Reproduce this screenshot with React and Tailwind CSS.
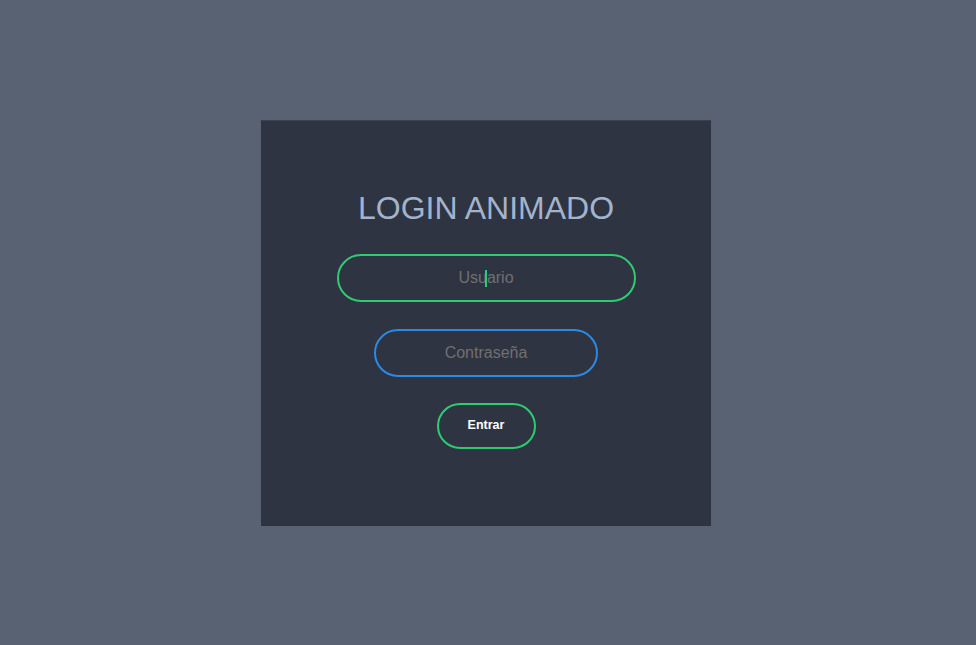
import { useState } from 'react';

const App = () => {
  const [user, setUser] = useState('');
  const [pass, setPass] = useState('');

  return (
    <div
      className="min-h-[645px] w-full bg-[#596273] flex items-center justify-center pr-[4px] pt-[1px]"
      style={{ fontFamily: '"Liberation Sans", Arial, sans-serif' }}
    >
      {/* Login box */}
      <form
        onSubmit={(e) => e.preventDefault()}
        className="w-[450px] h-[405px] bg-[#2e3442] flex flex-col items-center pt-[67px] shadow-[0_-1px_0_#3a4150]"
      >
        <h1 className="text-[32px] leading-[40px] font-normal text-[#a3b3cb] mb-[26px]">
          LOGIN ANIMADO
        </h1>

        {/* Usuario (focused) */}
        <div className="relative">
          <input
            type="text"
            value={user}
            onChange={(e) => setUser(e.target.value)}
            placeholder="Usuario"
            className="w-[299px] h-[48px] rounded-[24px] border-2 border-[#2ecc71] bg-transparent text-center text-[16px] text-white placeholder:text-[#707070] outline-none caret-transparent"
          />
          {!user && (
            <span className="absolute left-[148px] top-[16px] w-[2px] h-[17px] bg-[#2ecc71]" />
          )}
        </div>

        {/* Contraseña */}
        <input
          type="password"
          value={pass}
          onChange={(e) => setPass(e.target.value)}
          placeholder="Contraseña"
          className="mt-[27px] w-[224px] h-[48px] rounded-[24px] border-2 border-[#2b8ae6] bg-transparent text-center text-[16px] text-white placeholder:text-[#707070] outline-none"
        />

        <button
          type="submit"
          className="mt-[26px] w-[99px] h-[46px] rounded-[23px] border-2 border-[#2ecc71] bg-transparent text-white text-[12.5px] font-bold"
        >
          Entrar
        </button>
      </form>
    </div>
  );
};

export default App;
